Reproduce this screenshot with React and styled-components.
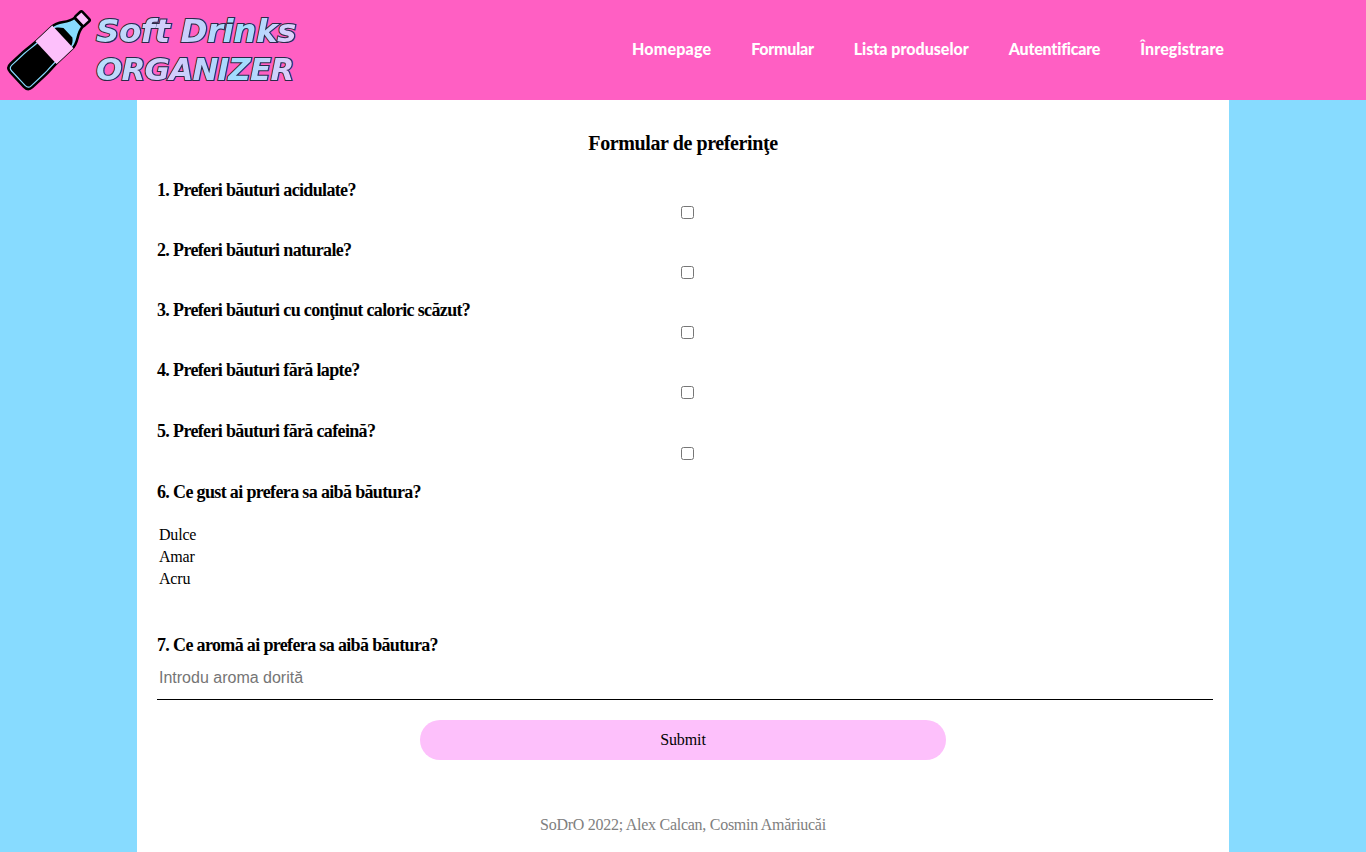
import React from "react";
import styled, { createGlobalStyle } from "styled-components";

const Global = createGlobalStyle`
  html, body { margin: 0; padding: 0; background: #87dbff; }
  body { font-family: "Liberation Serif", serif; color: #000; }
`;
const Page = styled.div`
  height: 852px;
  overflow: hidden;
  display: flex;
  flex-direction: column;
`;
const Header = styled.header`
  height: 100px;
  flex: none;
  background: #ff5fc3;
  display: flex;
  align-items: center;
  justify-content: space-between;
  padding: 0 142px 0 4px;
`;
const Brand = styled.div`
  display: flex;
  align-items: center;
`;
const BottleIcon = styled.svg`
  display: block;
  flex: none;
  width: 92px;
  height: 92px;
`;
const BrandText = styled.div`
  display: flex;
  flex-direction: column;
`;
const BrandLine = styled.span`
  position: relative;
  font-family: "DejaVu Sans", sans-serif;
  font-weight: 700;
  font-style: oblique;
  font-size: ${p => p.$size}px;
  line-height: 38px;
  letter-spacing: ${p => p.$spacing}px;
  white-space: nowrap;
  color: transparent;
  -webkit-text-stroke: 2px #2a2a48;
  &::after {
    content: attr(data-text);
    position: absolute;
    left: 0;
    top: 0;
    -webkit-text-stroke: 0;
    background: linear-gradient(100deg, #b4e0fc 0%, #d6cbfb 38%, #9fdefe 72%, #e6cbfb 100%);
    -webkit-background-clip: text;
    background-clip: text;
    color: transparent;
  }
`;
const Nav = styled.nav`
  display: flex;
  gap: 40px;
  margin-bottom: 4px;
`;
const NavLink = styled.a`
  font-family: "Lato", sans-serif;
  font-weight: 900;
  font-size: 16px;
  letter-spacing: ${p => p.$spacing || 0}px;
  color: #fff;
  white-space: nowrap;
`;
const Main = styled.main`
  width: 1092px;
  flex: 1;
  margin: 0 auto;
  background: #fff;
  display: flex;
  flex-direction: column;
`;
const Title = styled.h1`
  margin: 31px 0 0;
  font-size: 20px;
  line-height: 24px;
  font-weight: 700;
  letter-spacing: -0.4px;
  text-align: center;
`;
const Form = styled.form`
  margin-top: 22.15px;
  padding: 0 16px 0 20px;
  display: flex;
  flex-direction: column;
`;
const Question = styled.div`
  height: 60.1px;
  display: flex;
  flex-direction: column;
`;
const Label = styled.label`
  font-size: 18px;
  line-height: 26px;
  font-weight: 700;
  letter-spacing: -0.65px;
  margin-top: ${p => p.$gap || 0}px;
`;
const CheckRow = styled.div`
  display: flex;
  justify-content: center;
  padding-left: 4px;
`;
const Check = styled.input.attrs({ type: "checkbox" })`
  width: 13px;
  height: 13px;
  margin: 3px;
`;
const Options = styled.ul`
  list-style: none;
  margin: 19px 0 42px;
  padding: 0 0 0 2px;
  font-size: 16px;
  line-height: 22px;
  letter-spacing: -0.2px;
`;
const TextField = styled.input`
  display: block;
  width: 100%;
  box-sizing: border-box;
  height: 42.35px;
  border: 0;
  border-bottom: 1px solid #000;
  padding: 0 2px;
  outline: none;
  font-family: "Liberation Sans", sans-serif;
  font-size: 16px;
  &::placeholder { color: #757575; }
`;
const Submit = styled.button`
  display: block;
  width: 526px;
  height: 40px;
  margin: 20px 0 0 263px;
  border: 0;
  border-radius: 20px;
  background: #fdc0fb;
  font-family: "Liberation Serif", serif;
  font-size: 16px;
  letter-spacing: -0.1px;
  color: #000;
`;
const Footer = styled.footer`
  margin-top: 54px;
  text-align: center;
  font-size: 16px;
  line-height: 22px;
  letter-spacing: -0.27px;
  color: #808080;
`;

const Bottle = () => (
  <BottleIcon viewBox="0 0 92 92">
    <g transform="translate(47.5 43.5) rotate(47)">
      <rect x="-6.5" y="-47" width="13" height="9.5" rx="1.5" fill="#fdc0fb" stroke="#000" strokeWidth="2.5" />
      <path d="M-6 -37 L6 -37 C7 -27 15 -24 15 -14 L15 6 C15 12 16 18 16 24 L16 41 Q16 47 10 47 L-10 47 Q-16 47 -16 41 L-16 24 C-16 18 -15 12 -15 6 L-15 -14 C-15 -24 -7 -27 -6 -37 Z" fill="#87dbff" stroke="#000" strokeWidth="2.5" />
      <path d="M-12.5 -14 C-12 -17 -9 -20 -6 -22 L7 -22 C10 -20 12.5 -17 12.5 -14 L12.5 6 C12.5 12 13.6 18 13.6 24 L13.6 41 Q13.6 44.6 10 44.6 L-10 44.6 Q-13.6 44.6 -13.6 41 L-13.6 24 C-13.6 18 -12.5 12 -12.5 6 Z" fill="#000" />
      <rect x="-15.5" y="-15.5" width="31" height="23" fill="#fdc0fb" />
    </g>
  </BottleIcon>
);

const questions = [
  "1. Preferi băuturi acidulate?",
  "2. Preferi băuturi naturale?",
  "3. Preferi băuturi cu conţinut caloric scăzut?",
  "4. Preferi băuturi fără lapte?",
  "5. Preferi băuturi fără cafeină?",
];
const links = [
  { text: "Homepage", spacing: 0.2 },
  { text: "Formular", spacing: -0.25 },
  { text: "Lista produselor" },
  { text: "Autentificare", spacing: -0.2 },
  { text: "Înregistrare", spacing: 0.1 },
];

export default function App() {
  return (
    <Page>
      <Global />
      <Header>
        <Brand>
          <Bottle />
          <BrandText>
            <BrandLine $size={32.5} $spacing={-0.45} data-text="Soft Drinks">Soft Drinks</BrandLine>
            <BrandLine $size={31} $spacing={-0.8} data-text="ORGANIZER">ORGANIZER</BrandLine>
          </BrandText>
        </Brand>
        <Nav>{links.map(l => <NavLink key={l.text} $spacing={l.spacing}>{l.text}</NavLink>)}</Nav>
      </Header>
      <Main>
        <Title>Formular de preferinţe</Title>
        <Form>
          {questions.map(q => (
            <Question key={q}>
              <Label>{q}</Label>
              <CheckRow><Check /></CheckRow>
            </Question>
          ))}
          <Label $gap={1}>6. Ce gust ai prefera sa aibă băutura?</Label>
          <Options>
            <li>Dulce</li>
            <li>Amar</li>
            <li>Acru</li>
          </Options>
          <Label>7. Ce aromă ai prefera sa aibă băutura?</Label>
          <TextField placeholder="Introdu aroma dorită" />
          <Submit type="button">Submit</Submit>
        </Form>
        <Footer>SoDrO 2022; Alex Calcan, Cosmin Amăriucăi</Footer>
      </Main>
    </Page>
  );
}
